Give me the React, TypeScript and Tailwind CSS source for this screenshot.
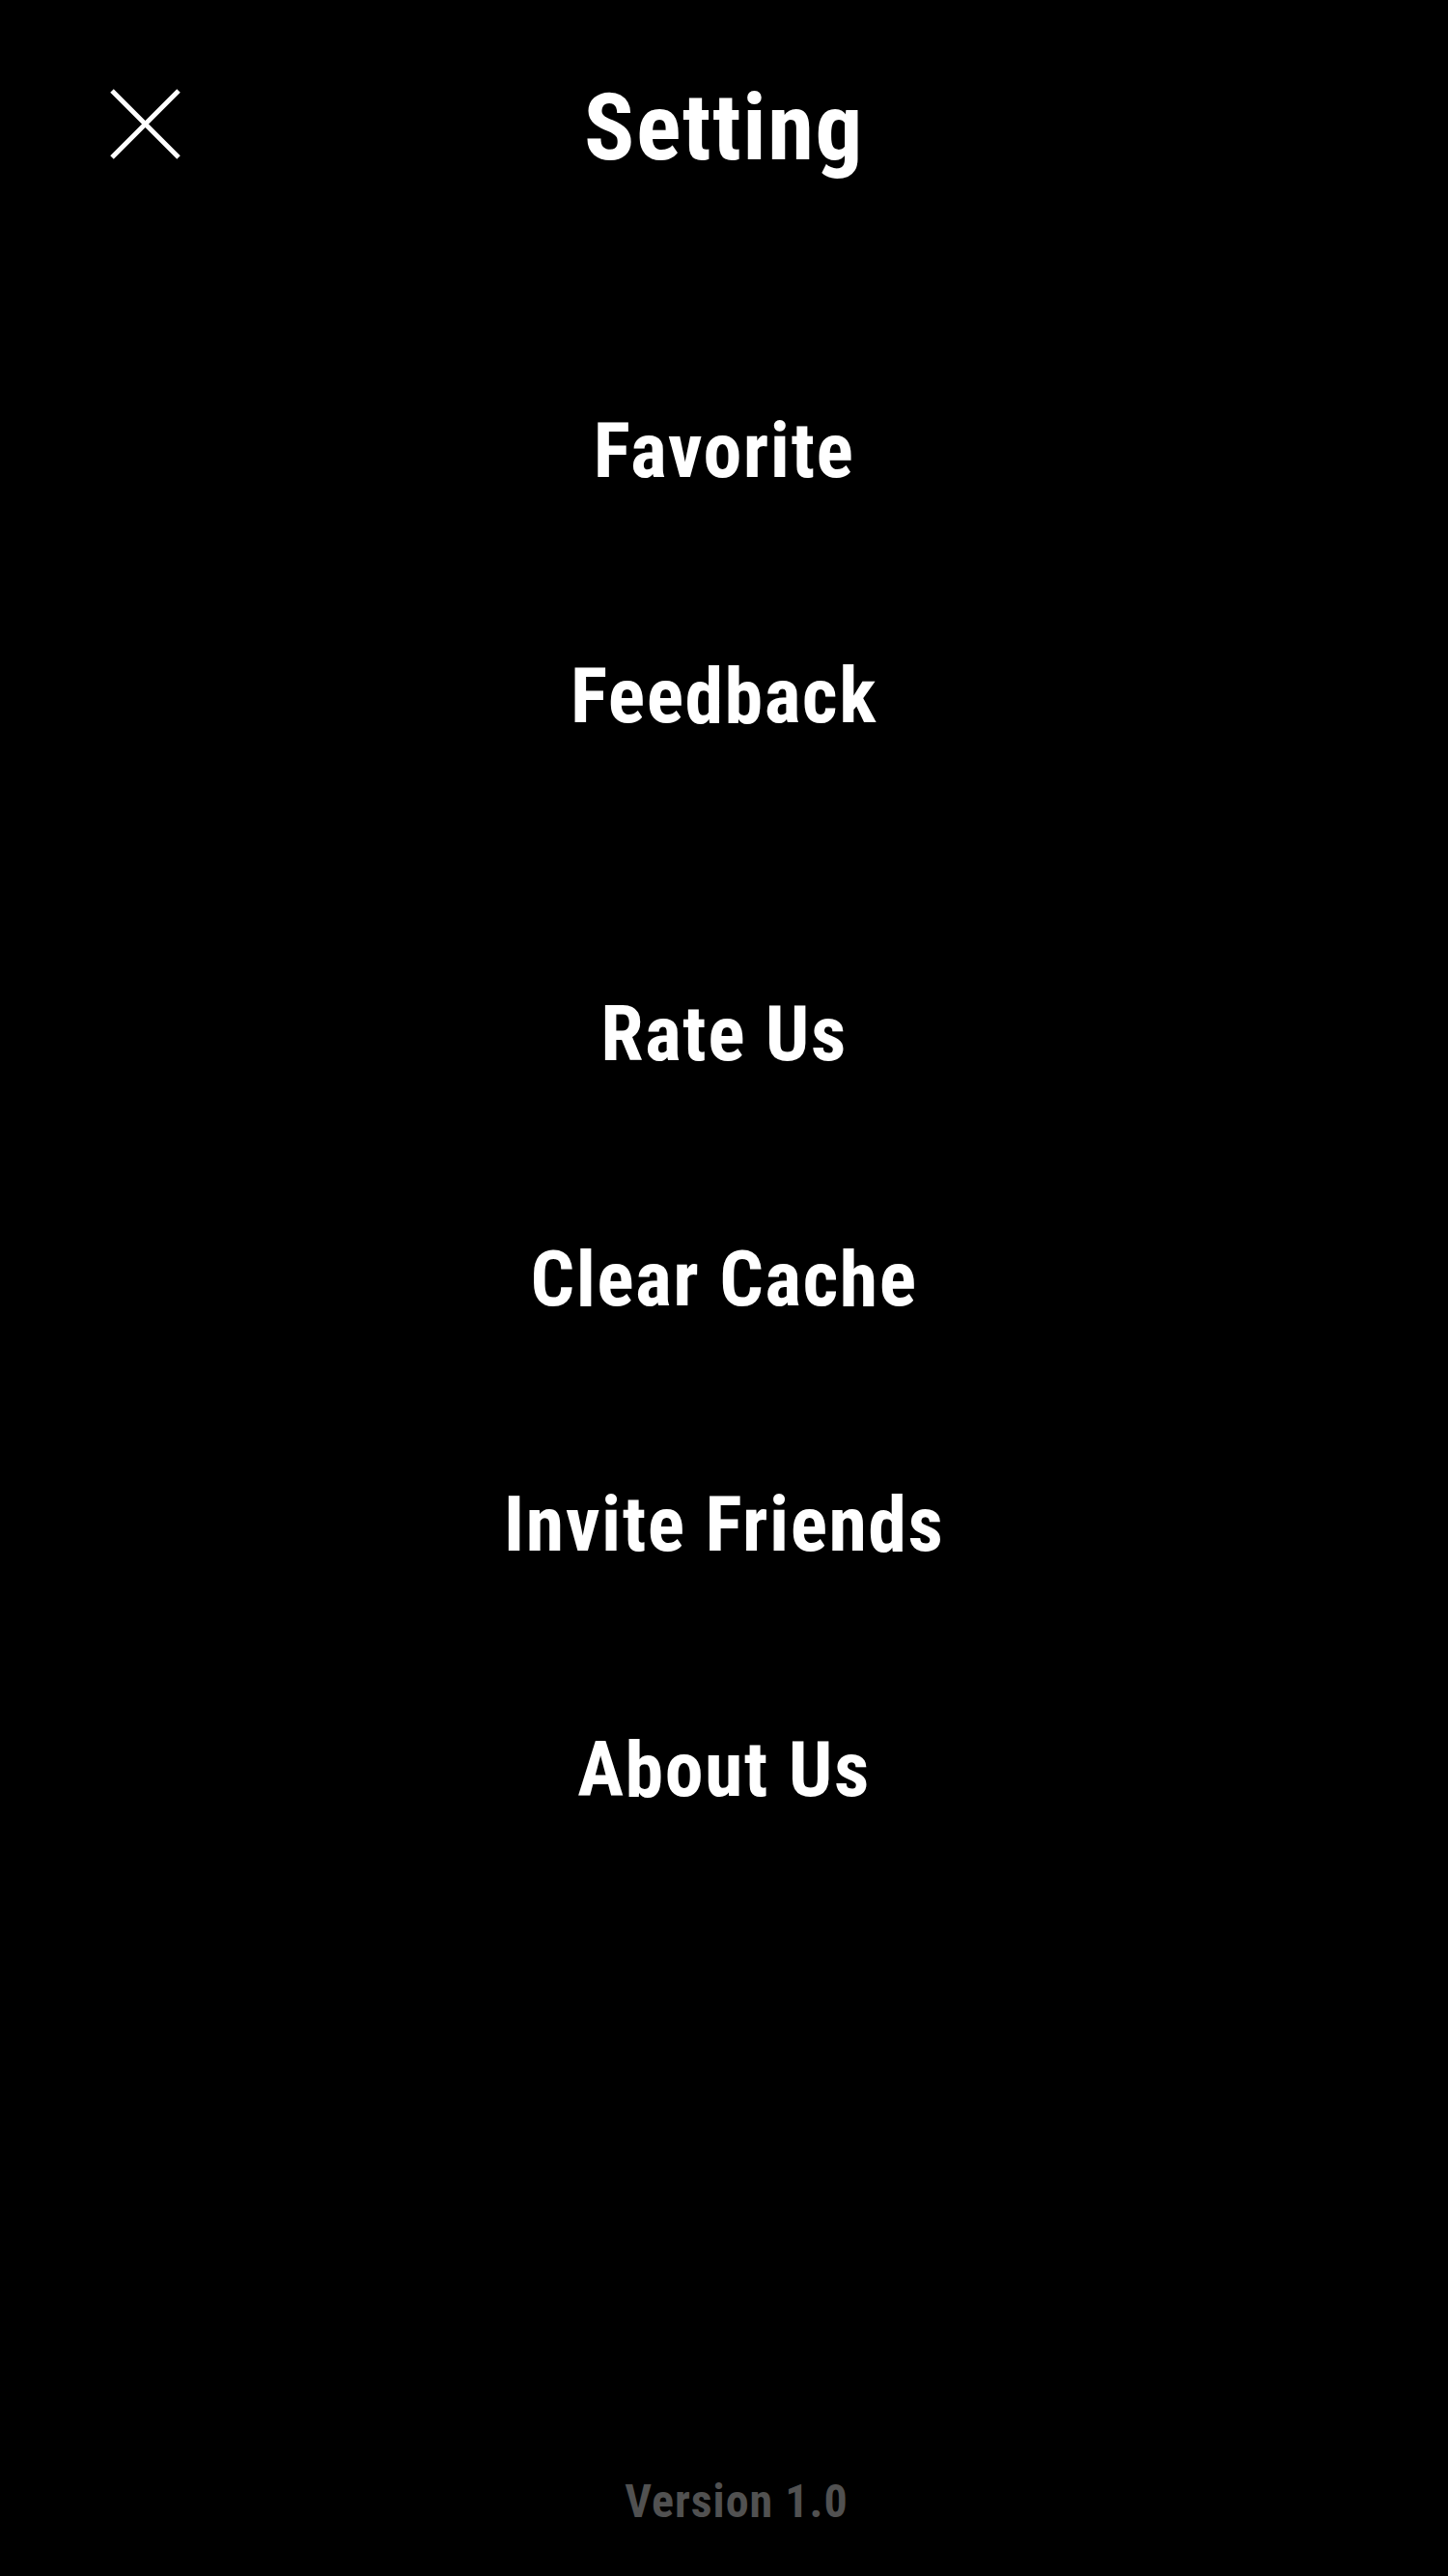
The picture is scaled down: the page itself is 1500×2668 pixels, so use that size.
const groupOne = ["Favorite", "Feedback"];
const groupTwo = ["Rate Us", "Clear Cache", "Invite Friends", "About Us"];

function CloseIcon() {
  return (
    <svg viewBox="0 0 73 73" className="w-[73px] h-[73px]" fill="none">
      <line x1="2" y1="2" x2="71" y2="71" stroke="white" strokeWidth="5" />
      <line x1="71" y1="2" x2="2" y2="71" stroke="white" strokeWidth="5" />
    </svg>
  );
}

function MenuItem({ label }: { label: string }) {
  return (
    <button className="text-[80px] leading-[80px] font-bold tracking-[1.5px] text-white bg-transparent">
      {label}
    </button>
  );
}

export default function App() {
  return (
    <div className="bg-black w-full min-h-[2668px] flex flex-col font-['Roboto_Condensed','Liberation_Sans',sans-serif] text-white">
      <header className="pt-[84px] px-[114px] flex items-start justify-between">
        <button className="mt-[8px] w-[73px] h-[73px] flex items-center justify-center" aria-label="Close">
          <CloseIcon />
        </button>
        <h1 className="text-[97px] leading-[97px] font-bold tracking-[1.5px]">Setting</h1>
        <div className="w-[73px] h-[73px]" />
      </header>
      <nav className="mt-[246px] flex flex-col items-center gap-[174px]">
        {groupOne.map((l) => (
          <MenuItem key={l} label={l} />
        ))}
      </nav>
      <nav className="mt-[270px] flex flex-col items-center gap-[174px]">
        {groupTwo.map((l) => (
          <MenuItem key={l} label={l} />
        ))}
      </nav>
      <footer className="mt-auto pb-[53px] pl-[26px] flex justify-center">
        <span className="text-[48px] leading-[48px] font-bold tracking-[1px] text-[#515151]">Version 1.0</span>
      </footer>
    </div>
  );
}
